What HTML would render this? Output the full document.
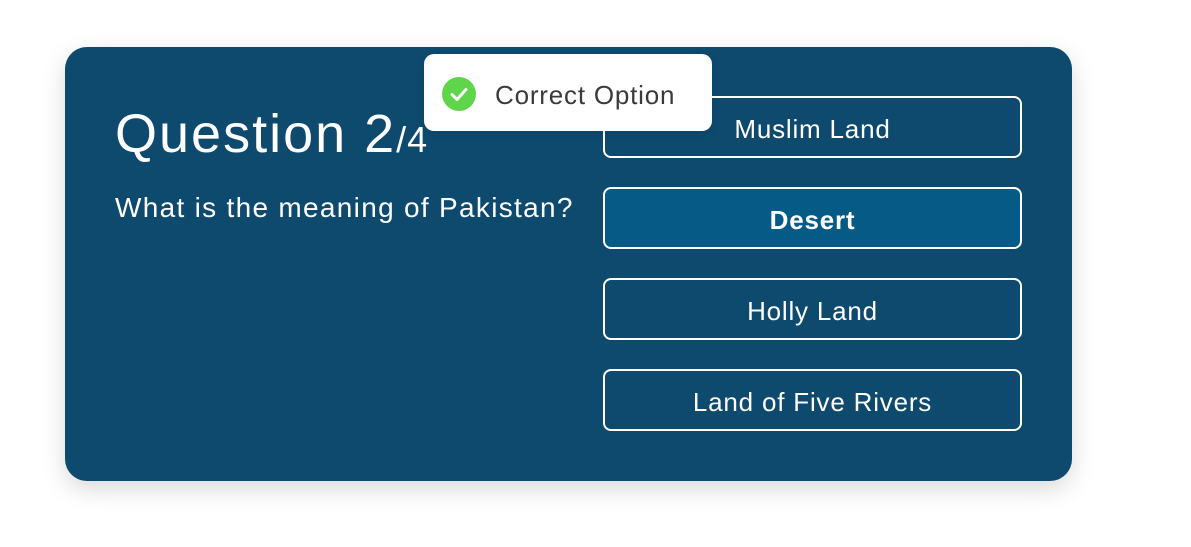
<!DOCTYPE html>
<html><head><style>
body{margin:0;width:1191px;height:547px;background:#fff;font-family:"Liberation Sans",sans-serif;position:relative;overflow:hidden}
.card{position:absolute;left:65px;top:47px;width:1007px;height:434px;background:#0e4a6e;border-radius:22px;box-shadow:0 8px 24px rgba(0,0,0,0.15)}
.t{position:absolute;left:115px;top:102px;color:#fff;font-size:54px;line-height:64px;white-space:nowrap;letter-spacing:2px}
.t span{font-size:36px;letter-spacing:1px}
.q{position:absolute;left:115px;top:190px;color:#fff;font-size:28px;line-height:36px;white-space:nowrap;letter-spacing:1.3px}
.b{position:absolute;left:603px;width:415px;height:58px;border:2px solid #fff;border-radius:8px;color:#fff;font-size:26px;line-height:62px;text-align:center;letter-spacing:0.8px}
.toast{position:absolute;left:424px;top:54px;width:288px;height:77px;background:#fff;border-radius:10px;box-shadow:0 2px 8px rgba(0,0,0,0.1)}
.toast .c{position:absolute;left:18px;top:23px;width:34px;height:34px;border-radius:50%;background:#5fd54a}
.toast .x{position:absolute;left:71px;top:25px;font-size:26px;color:#3a3a3a;line-height:32px;white-space:nowrap;letter-spacing:0.8px}
</style></head><body>
<div class="card"></div>
<div class="t">Question 2<span>/4</span></div>
<div class="q">What is the meaning of Pakistan?</div>
<div class="b" style="top:96px">Muslim Land</div>
<div class="b" style="top:187px;background:#065a86;font-weight:bold">Desert</div>
<div class="b" style="top:278px">Holly Land</div>
<div class="b" style="top:369px">Land of Five Rivers</div>
<div class="toast"><div class="c"><svg width="34" height="34" viewBox="0 0 34 34"><path d="M10 17.5l5 5 9-10" fill="none" stroke="#fff" stroke-width="3" stroke-linecap="round" stroke-linejoin="round"/></svg></div><div class="x">Correct Option</div></div>
</body></html>
